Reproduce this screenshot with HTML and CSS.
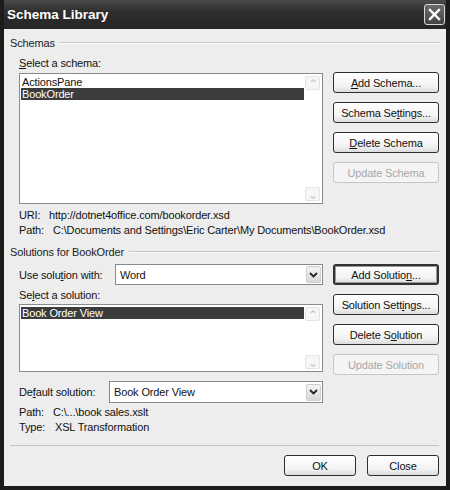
FILE: index.html
```html
<!DOCTYPE html>
<html lang="en">
<head>
    <meta charset="UTF-8">
    <title>Schema Library</title>
    <link rel="stylesheet" href="styles.css">
</head>
<body>
    <div class="window">
        <!-- Title bar -->
        <div class="titlebar">
            <span class="title">Schema Library</span>
            <button class="close-button">
                <svg width="13" height="13" viewBox="0 0 13 13">
                    <path d="M2 2 L11 11 M11 2 L2 11" stroke="#fff" stroke-width="2.4" stroke-linecap="square"/>
                </svg>
            </button>
        </div>

        <div class="content">
            <!-- Schemas group -->
            <div class="group-title"><span>Schemas</span></div>
            <div class="label-row"><u>S</u>elect a schema:</div>
            <div class="pane schema-pane">
                <div class="listbox tall">
                    <ul class="items">
                        <li>ActionsPane</li>
                        <li class="selected">BookOrder</li>
                    </ul>
                    <div class="scroll">
                        <span class="scroll-btn">&#8963;</span>
                        <span class="scroll-btn">&#8964;</span>
                    </div>
                </div>
                <div class="buttons">
                    <button class="btn"><u>A</u>dd Schema...</button>
                    <button class="btn">Schema Se<u>t</u>tings...</button>
                    <button class="btn"><u>D</u>elete Schema</button>
                    <button class="btn" disabled>Update Schema</button>
                </div>
            </div>
            <div class="info-row"><span class="key">URI:</span>http://dotnet4office.com/bookorder.xsd</div>
            <div class="info-row"><span class="key path">Path:</span>C:\Documents and Settings\Eric Carter\My Documents\BookOrder.xsd</div>

            <!-- Solutions group -->
            <div class="group-title second"><span>Solutions for BookOrder</span></div>
            <div class="pane solution-pane">
                <div class="left-col">
                    <div class="field-row">
                        <label class="field-label">Use solu<u>t</u>ion with:</label>
                        <div class="dropdown">
                            <span>Word</span>
                            <span class="drop-btn">
                                <svg width="9" height="6" viewBox="0 0 9 6"><path d="M1 1 L4.5 4.5 L8 1" fill="none" stroke="#222" stroke-width="1.8"/></svg>
                            </span>
                        </div>
                    </div>
                    <div class="label-row small">Se<u>l</u>ect a solution:</div>
                    <div class="listbox short">
                        <ul class="items">
                            <li class="selected">Book Order View</li>
                        </ul>
                        <div class="scroll">
                            <span class="scroll-btn">&#8963;</span>
                            <span class="scroll-btn">&#8964;</span>
                        </div>
                    </div>
                </div>
                <div class="buttons">
                    <button class="btn default">Add Solutio<u>n</u>...</button>
                    <button class="btn">Solution Sett<u>i</u>ngs...</button>
                    <button class="btn">Delete S<u>o</u>lution</button>
                    <button class="btn" disabled>Update Solution</button>
                </div>
            </div>
            <div class="field-row default-row">
                <label class="field-label narrow">De<u>f</u>ault solution:</label>
                <div class="dropdown wide">
                    <span>Book Order View</span>
                    <span class="drop-btn">
                        <svg width="9" height="6" viewBox="0 0 9 6"><path d="M1 1 L4.5 4.5 L8 1" fill="none" stroke="#222" stroke-width="1.8"/></svg>
                    </span>
                </div>
            </div>
            <div class="info-row"><span class="key path">Path:</span>C:\...\book sales.xslt</div>
            <div class="info-row"><span class="key type">Type:</span>XSL Transformation</div>

            <!-- Footer -->
            <div class="footer">
                <button class="btn footer-btn">OK</button>
                <button class="btn footer-btn">Close</button>
            </div>
        </div>
    </div>
</body>
</html>
```

FILE: styles.css
```css
/* Reset */
* {
    margin: 0;
    padding: 0;
    box-sizing: border-box;
}

body {
    font-family: "Liberation Sans", Arial, sans-serif;
    font-size: 11px;
    letter-spacing: -0.15px;
    color: #111;
    background: #fff;
}

/* Window frame */
.window {
    width: 450px;
    height: 490px;
    display: flex;
    flex-direction: column;
    background: #1c1c1c;
    padding: 0 4px 4px 4px;
}

.titlebar {
    height: 29px;
    display: flex;
    align-items: center;
    justify-content: space-between;
    padding: 0 1px 0 3px;
    background: linear-gradient(#4a4a4a, #2e2e2e 40%, #262626);
}

.title {
    color: #fff;
    font-weight: bold;
    font-size: 13.5px;
    letter-spacing: 0;
}

.close-button {
    width: 21px;
    height: 21px;
    border: 1px solid #d8d8d8;
    border-radius: 3px;
    background: linear-gradient(#6a6a6a, #444);
    display: flex;
    align-items: center;
    justify-content: center;
}

/* Dialog body */
.content {
    flex: 1;
    background: #ededed;
    padding: 7px 7px 0 6px;
    display: flex;
    flex-direction: column;
}

.group-title {
    display: flex;
    align-items: center;
    height: 14px;
    color: #222;
}

.group-title::after {
    content: "";
    flex: 1;
    height: 1px;
    background: #c4c4c4;
    margin-left: 5px;
    border-bottom: 1px solid #fafafa;
}

.group-title.second {
    margin-top: 8px;
}

.label-row {
    height: 14px;
    margin: 6px 0 3px 9px;
    line-height: 14px;
}

.label-row.small {
    margin: 3px 0 2px 0;
}

/* Two column panes */
.pane {
    display: flex;
    gap: 10px;
    padding-left: 9px;
}

.left-col {
    width: 304px;
    display: flex;
    flex-direction: column;
}

.solution-pane {
    margin-top: 5px;
}

.buttons {
    width: 106px;
    display: flex;
    flex-direction: column;
    gap: 9px;
}

.schema-pane .buttons {
    margin-top: -1px;
}

.btn {
    height: 21px;
    font-family: inherit;
    font-size: 11px;
    letter-spacing: inherit;
    color: #111;
    border: 1px solid #2e2e2e;
    border-radius: 3px;
    background: linear-gradient(#ffffff, #f2f2f2 70%, #dcdcdc);
}

.btn.default {
    border: 2px solid #333;
    box-shadow: inset 0 0 0 1px #9a9a9a;
}

.btn:disabled {
    color: #a8a8a8;
    border-color: #c6c6c6;
    background: #f4f4f4;
}

/* List boxes */
.listbox {
    width: 304px;
    background: #fff;
    border: 1px solid #8a8a8a;
    display: flex;
    padding: 2px 1px 2px 1px;
}

.listbox.tall {
    height: 131px;
}

.listbox.short {
    height: 68px;
}

.items {
    list-style: none;
    flex: 1;
}

.items li {
    height: 12px;
    line-height: 12px;
    padding-left: 1px;
    margin-right: 1px;
}

.items li.selected {
    background: #3c3c3c;
    color: #fff;
}

.scroll {
    width: 15px;
    display: flex;
    flex-direction: column;
    justify-content: space-between;
    margin-right: 1px;
}

.scroll-btn {
    height: 14px;
    border: 1px solid #e4e4e4;
    border-radius: 2px;
    background: #f6f6f6;
    color: #c8c8c8;
    font-size: 12px;
    line-height: 14px;
    text-align: center;
}

/* Drop downs */
.field-row {
    display: flex;
    align-items: center;
    height: 21px;
}

.field-label {
    width: 96px;
}

.field-label.narrow {
    width: 90px;
}

.dropdown {
    flex: 0 0 208px;
    height: 21px;
    border: 1px solid #8a8a8a;
    background: #fff;
    display: flex;
    align-items: center;
    justify-content: space-between;
    padding-left: 4px;
}

.dropdown.wide {
    flex-basis: 214px;
    height: 22px;
}

.drop-btn {
    width: 15px;
    height: 17px;
    margin-right: 1px;
    border: 1px solid #cfcfcf;
    border-radius: 2px;
    background: linear-gradient(#f4f4f4, #d8d8d8);
    display: flex;
    align-items: center;
    justify-content: center;
}

.default-row {
    margin: 6px 0 1px 9px;
    height: 22px;
}

/* Info lines */
.info-row {
    height: 14px;
    line-height: 14px;
    margin-left: 9px;
    margin-top: 1px;
}

.schema-pane + .info-row {
    margin-top: 4px;
}

.key {
    display: inline-block;
    width: 30px;
}

.key.path {
    width: 34px;
}

.key.type {
    width: 36px;
}

/* Footer */
.footer {
    margin-top: 11px;
    border-top: 1px solid #c4c4c4;
    padding-top: 9px;
    display: flex;
    justify-content: flex-end;
    gap: 11px;
}

.footer-btn {
    width: 72px;
}
```
